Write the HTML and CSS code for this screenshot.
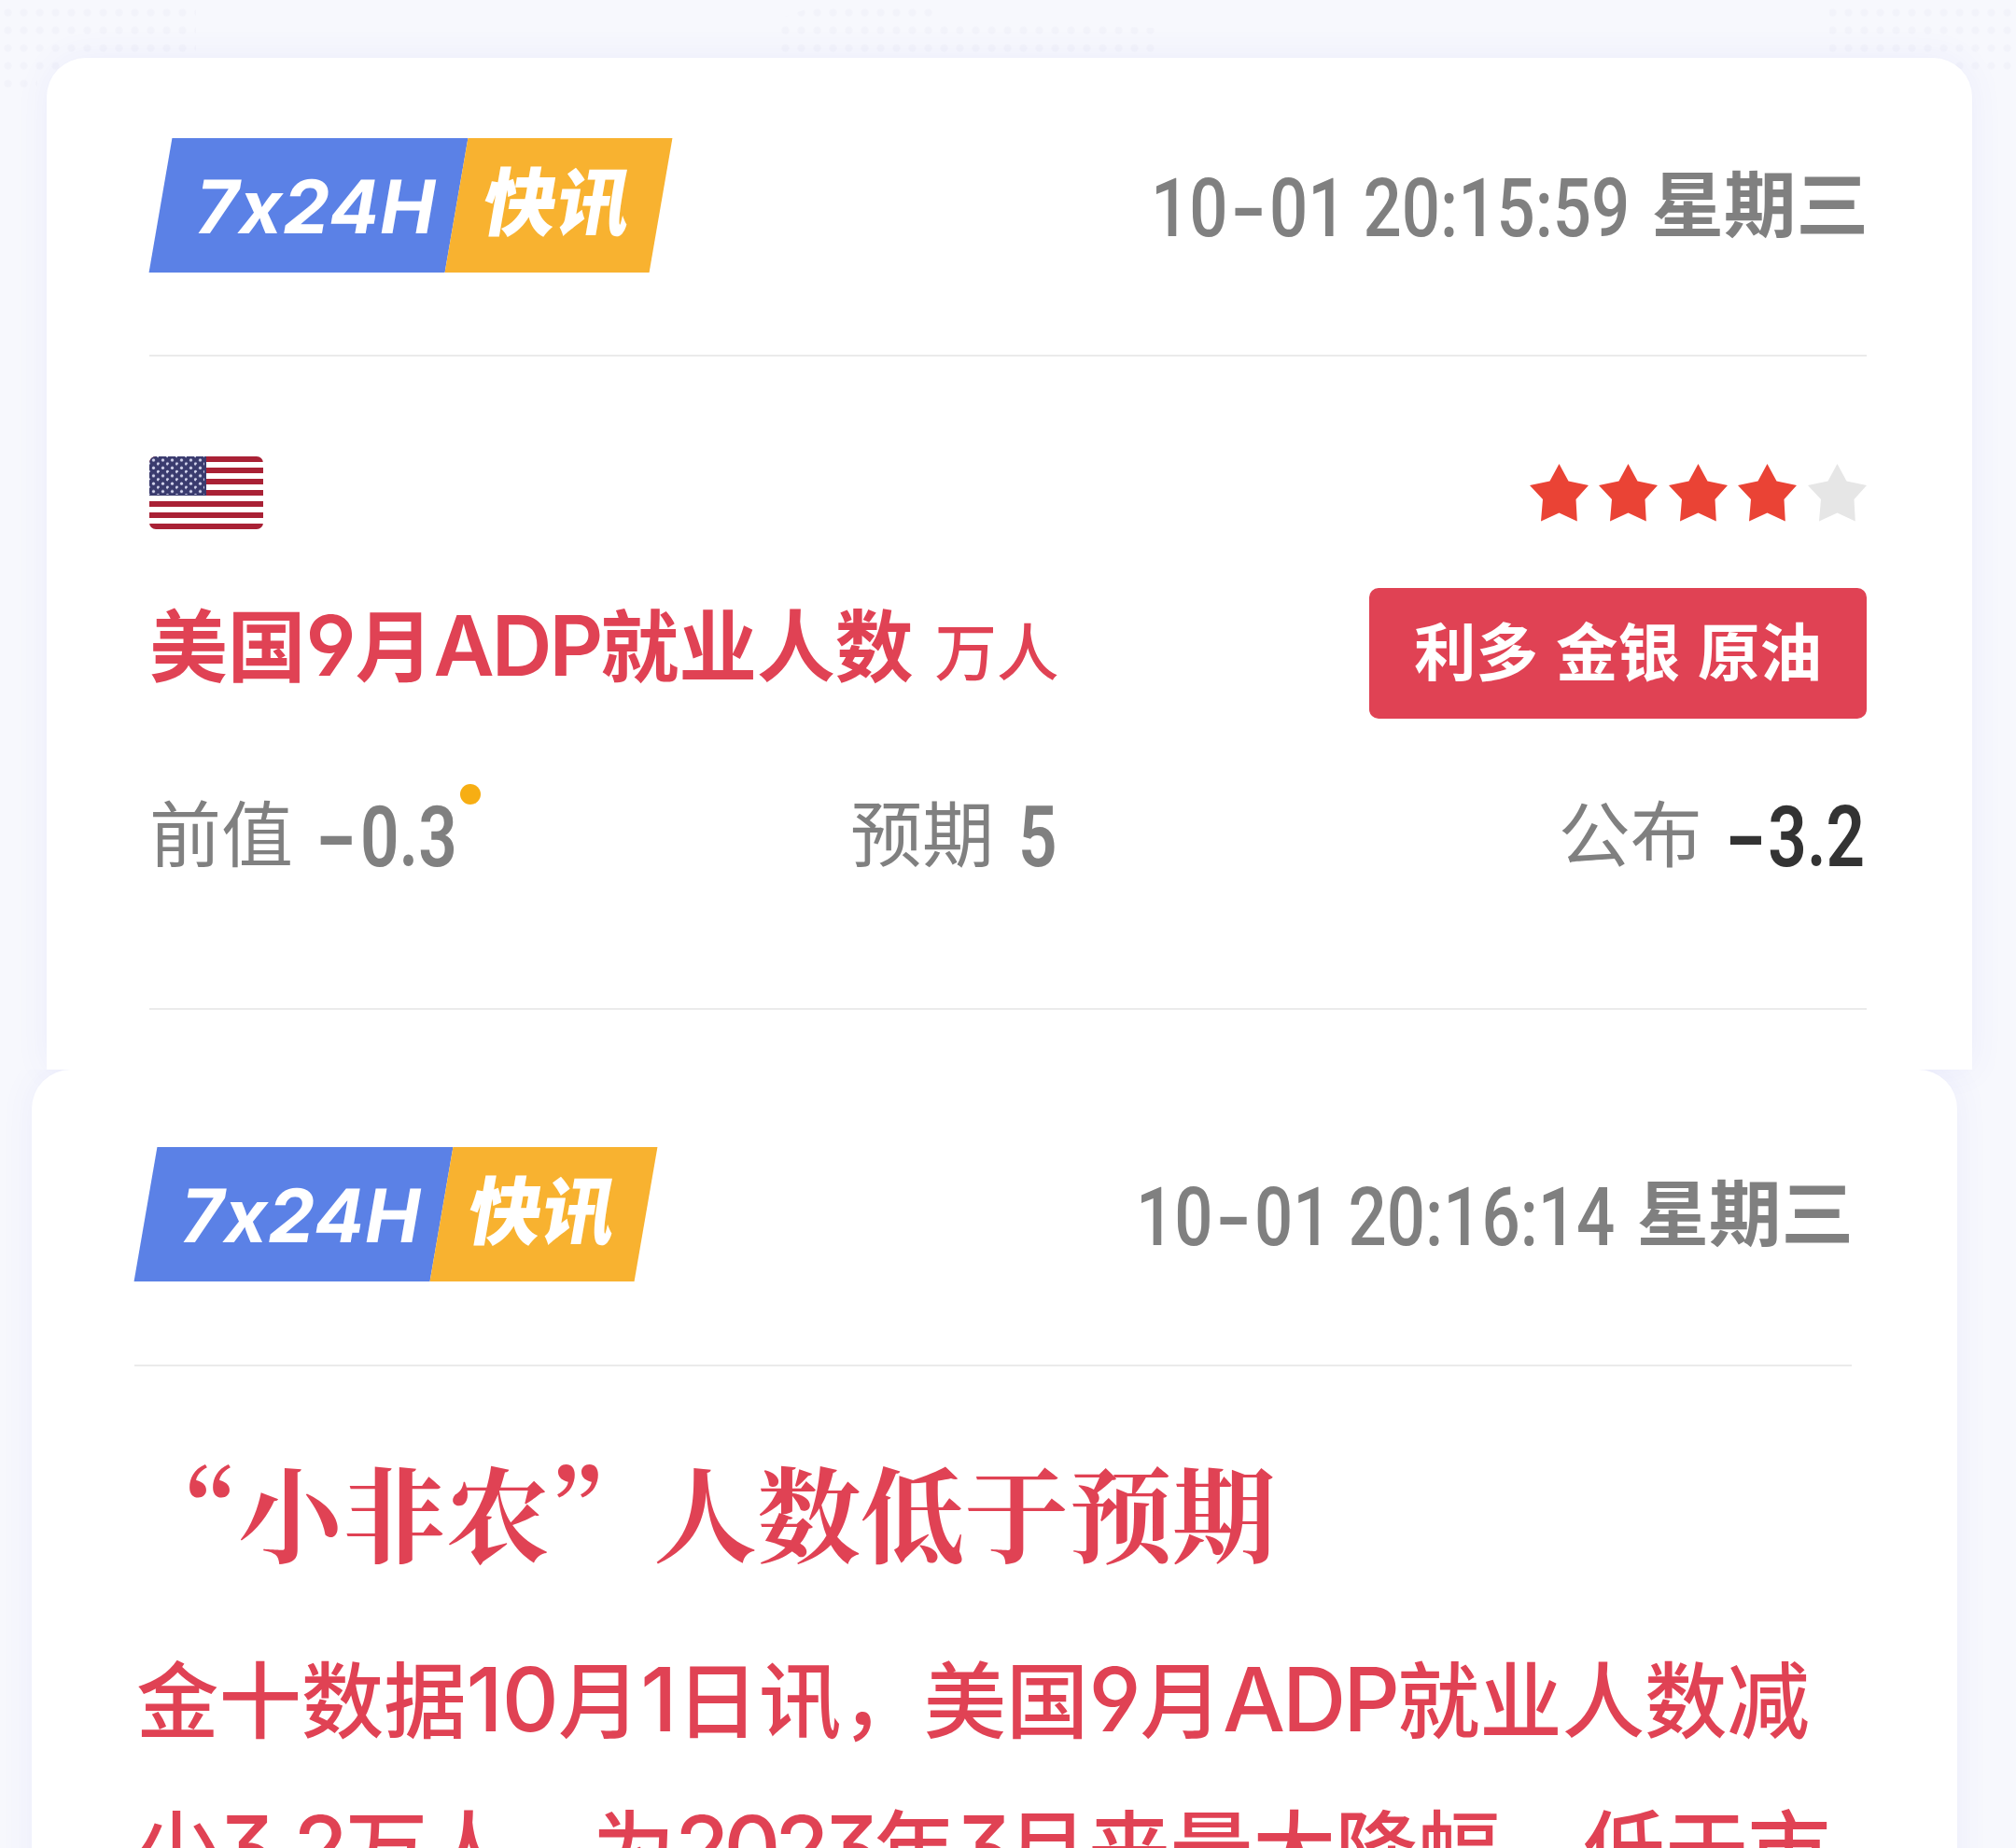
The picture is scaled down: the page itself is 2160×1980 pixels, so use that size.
FILE: index.html
```html
<!DOCTYPE html>
<html lang="zh-CN">
<head>
    <meta charset="UTF-8">
    <meta name="viewport" content="width=device-width, initial-scale=1.0">
    <title>7x24H 快讯</title>
    <link rel="stylesheet" href="styles.css">
</head>
<body>
    <svg width="0" height="0" class="defs">
        <defs>
            <symbol id="star" viewBox="0 0 63 62">
                <path d="M31.5 0L41.5 18.5L63 23L49.5 38L50.8 61.5L31.5 52.5L12 61.5L14 38L0 23L21.5 18.5Z"/>
            </symbol>
            <pattern id="flag-stars" width="10" height="8.4" patternUnits="userSpaceOnUse">
                <circle cx="4.5" cy="4" r="1.6" fill="#d5d6ee"/>
                <circle cx="9.5" cy="8" r="1.6" fill="#d5d6ee"/>
                <circle cx="-0.5" cy="8" r="1.6" fill="#d5d6ee"/>
                <circle cx="9.5" cy="-0.4" r="1.6" fill="#d5d6ee"/>
            </pattern>
        </defs>
    </svg>

    <div class="card card-data">
        <div class="card-header">
            <div class="logo">
                <div class="logo-blue"><span>7x24H</span></div>
                <div class="logo-yellow"><span>快讯</span></div>
            </div>
            <div class="time"><span class="num">10<i class="dash">-</i>01 20:15:59</span><span class="week">星期三</span></div>
        </div>

        <div class="meta">
            <svg class="flag" viewBox="0 0 122 78">
                <rect width="122" height="78" fill="#fff"/>
                <path d="M0 3H122M0 15H122M0 27H122M0 39H122M0 51H122M0 63H122M0 75H122" stroke="#a92135" stroke-width="6"/>
                <rect width="61" height="42" fill="#3a3b6e"/>
                <rect width="59" height="41" fill="url(#flag-stars)"/>
            </svg>
            <div class="stars">
                <svg><use href="#star"/></svg>
                <svg><use href="#star"/></svg>
                <svg><use href="#star"/></svg>
                <svg><use href="#star"/></svg>
                <svg class="off"><use href="#star"/></svg>
            </div>
        </div>

        <div class="title-row">
            <h2 class="title">美国<span class="latin">9</span>月<span class="latin word">ADP</span>就业人数<span class="unit">万人</span></h2>
            <div class="tag">利多 金银 原油</div>
        </div>

        <div class="values">
            <div class="value">前值<b class="num"><i class="dash">-</i>0.3</b><span class="dot"></span></div>
            <div class="value">预期<b class="num">5</b></div>
            <div class="value actual">公布<b class="num"><i class="dash">-</i>3.2</b></div>
        </div>
    </div>

    <div class="card card-news">
        <div class="card-header">
            <div class="logo">
                <div class="logo-blue"><span>7x24H</span></div>
                <div class="logo-yellow"><span>快讯</span></div>
            </div>
            <div class="time"><span class="num">10<i class="dash">-</i>01 20:16:14</span><span class="week">星期三</span></div>
        </div>

        <h1 class="headline">“小非农”人数低于预期</h1>
        <p class="content">金十数据<span class="latin">10</span>月<span class="latin">1</span>日讯，美国<span class="latin">9</span>月<span class="latin word">ADP</span>就业人数减<br>少<span class="latin word">3.2</span>万人，为<span class="latin digits">2023</span>年<span class="latin digits">3</span>月来最大降幅，低于市</p>
    </div>
</body>
</html>
```
FILE: styles.css
```css
* {
    box-sizing: border-box;
    margin: 0;
    padding: 0;
}

body {
    width: 2160px;
    height: 1980px;
    overflow: hidden;
    padding-top: 62px;
    font-family: "Noto Sans CJK SC", sans-serif;
    background: #f7f8fd;
}

/* faint dotted map behind the cards */
body::before {
    content: "";
    position: absolute;
    inset: 0;
    z-index: -1;
    background: radial-gradient(circle, #f2f3fa 3px, transparent 5px) 0 4px / 17px 19px;
    clip-path: polygon(0 0, 210px 0, 210px 62px, 40px 62px, 40px 100px, 0 100px, 0 62px, 830px 62px, 830px 22px, 890px 0, 1000px 0, 1000px 22px, 1240px 30px, 1240px 62px, 1960px 62px, 1960px 0, 2160px 0, 2160px 80px, 0 80px);
}

.defs {
    position: absolute;
}

.card {
    width: 2063px;
    padding: 0 113px 0 110px;
    background: #fff;
    border-radius: 42px 42px 0 0;
    box-shadow: 0 0 36px rgba(80, 80, 230, 0.07);
}

.card-data {
    height: 1084px;
    margin-left: 50px;
}

/* clip the top so its shadow does not fall on the card above */
.card-news {
    height: 900px;
    margin-left: 34px;
    clip-path: inset(0 -60px 0 -60px);
}

.card-header {
    display: flex;
    justify-content: space-between;
    height: 320px;
    padding-top: 86px;
    border-bottom: 2px solid #ebebeb;
}

.card-news .card-header {
    height: 318px;
    padding-top: 83px;
}

.logo {
    display: flex;
    height: 144px;
    padding-left: 12px;
    color: #fff;
}

.logo-blue,
.logo-yellow {
    transform: skewX(-9.8deg);
    white-space: nowrap;
}

.logo-blue {
    width: 317px;
    padding-left: 39px;
    background: #5b81e6;
    font: 700 79px/147px Inter, sans-serif;
    letter-spacing: 1px;
}

.logo-yellow {
    width: 219px;
    padding-left: 29px;
    background: #f8b230;
    font-size: 79px;
    font-weight: 900;
    line-height: 127px;
}

.time {
    display: flex;
    height: 144px;
    color: #808080;
}

.time .num {
    font: 500 88px/149px Roboto, sans-serif;
    transform: scaleX(0.825);
    transform-origin: right;
    margin-right: 23px;
}

.week {
    margin-right: -2px;
    font-size: 77.5px;
    font-weight: 700;
    line-height: 132px;
}

.dash {
    display: inline-block;
    font-style: normal;
    transform: scaleX(1.5);
    margin: 0 12px;
}

.meta {
    display: flex;
    justify-content: space-between;
    align-items: center;
    height: 248px;
    padding-top: 44px;
}

.flag {
    width: 122px;
    height: 78px;
    border-radius: 7px;
}

.stars {
    display: flex;
    gap: 11.6px;
}

.stars svg {
    width: 63px;
    height: 62px;
    fill: #ea4335;
}

.stars .off {
    fill: #e6e6e6;
}

.title-row {
    display: flex;
    justify-content: space-between;
    height: 140px;
}

.title {
    color: #e04254;
    font-size: 83.8px;
    font-weight: 700;
    line-height: 115px;
    white-space: nowrap;
}

.latin {
    font-family: Inter, sans-serif;
    font-size: 1.07em;
    line-height: 0;
    letter-spacing: -1px;
    font-feature-settings: "ss01", "cv09";
}

.word {
    letter-spacing: -3px;
}

.digits {
    letter-spacing: -6.2px;
}

.title .latin {
    font-weight: 600;
}

.unit {
    margin-left: 23px;
    font-size: 66.5px;
    font-weight: 500;
    line-height: 0;
}

.tag {
    width: 533px;
    height: 140px;
    border-radius: 10px;
    background: #e04254;
    color: #fff;
    font-size: 66.5px;
    font-weight: 700;
    line-height: 130px;
    text-align: center;
    white-space: nowrap;
    word-spacing: 4px;
}

.values {
    display: grid;
    grid-template-columns: 751px 1fr auto;
    height: 312px;
    padding-top: 54px;
    border-bottom: 2px solid #ebebeb;
}

.value {
    display: flex;
    color: #808080;
    font-size: 77px;
    line-height: 132px;
}

.value .num {
    font: 600 91px/146px Roboto, sans-serif;
    transform: scaleX(0.8);
    transform-origin: left;
    margin-left: 26px;
}

.value .dash {
    margin: 0 15px 0 9px;
    transform: scaleX(1.7);
}

.actual .num {
    color: #333;
    transform-origin: right;
    margin: 0 2px 0 -11px;
}

.actual .dash {
    margin-right: 13px;
}

.dot {
    width: 22px;
    height: 22px;
    margin: 16px 0 0 -34px;
    border-radius: 50%;
    background: #f7ae13;
}

.headline {
    padding-top: 79px;
    color: #e04254;
    font-family: "Noto Serif CJK SC", "Noto Serif SC", "Noto Sans CJK SC", serif;
    font-size: 111.2px;
    font-weight: 700;
    line-height: 150px;
}

.content {
    padding: 44px 0 0 2px;
    color: #e04254;
    font-size: 88.4px;
    font-weight: 500;
    line-height: 158.5px;
    white-space: nowrap;
}
```
